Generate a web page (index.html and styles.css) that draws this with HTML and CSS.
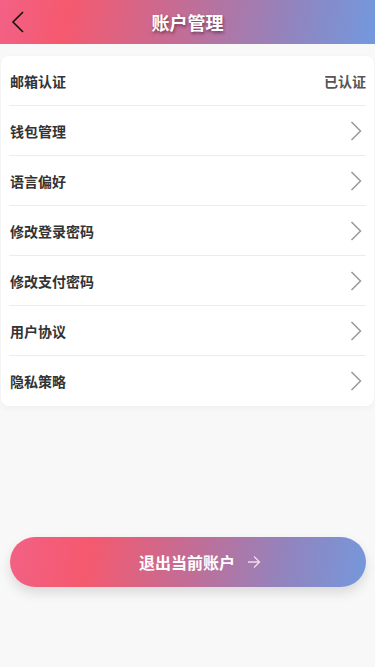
FILE: index.html
```html
<!DOCTYPE html>
<html lang="zh">
<head>
<meta charset="UTF-8">
<meta name="viewport" content="width=device-width, initial-scale=1.0">
<title>账户管理</title>
<link rel="stylesheet" href="styles.css">
</head>
<body>
<div class="header">
  <span class="back">
    <svg width="14" height="22" viewBox="0 0 14 22"><path d="M12 1 L2 11 L12 21" fill="none" stroke="#111" stroke-width="1.6"/></svg>
  </span>
  <div class="title">账户管理</div>
</div>
<div class="card">
  <div class="row"><span class="label">邮箱认证</span><span class="value">已认证</span></div>
  <div class="row"><span class="label">钱包管理</span><span class="arrow"><svg width="12" height="20" viewBox="0 0 12 20"><path d="M1.5 1 L10.5 10 L1.5 19" fill="none" stroke="#999" stroke-width="1.5"/></svg></span></div>
  <div class="row"><span class="label">语言偏好</span><span class="arrow"><svg width="12" height="20" viewBox="0 0 12 20"><path d="M1.5 1 L10.5 10 L1.5 19" fill="none" stroke="#999" stroke-width="1.5"/></svg></span></div>
  <div class="row"><span class="label">修改登录密码</span><span class="arrow"><svg width="12" height="20" viewBox="0 0 12 20"><path d="M1.5 1 L10.5 10 L1.5 19" fill="none" stroke="#999" stroke-width="1.5"/></svg></span></div>
  <div class="row"><span class="label">修改支付密码</span><span class="arrow"><svg width="12" height="20" viewBox="0 0 12 20"><path d="M1.5 1 L10.5 10 L1.5 19" fill="none" stroke="#999" stroke-width="1.5"/></svg></span></div>
  <div class="row"><span class="label">用户协议</span><span class="arrow"><svg width="12" height="20" viewBox="0 0 12 20"><path d="M1.5 1 L10.5 10 L1.5 19" fill="none" stroke="#999" stroke-width="1.5"/></svg></span></div>
  <div class="row last"><span class="label">隐私策略</span><span class="arrow"><svg width="12" height="20" viewBox="0 0 12 20"><path d="M1.5 1 L10.5 10 L1.5 19" fill="none" stroke="#999" stroke-width="1.5"/></svg></span></div>
</div>
<div class="logout">
  <span>退出当前账户</span>
  <svg width="14" height="14" viewBox="0 0 14 14"><path d="M1 7 H12.5 M7 1.5 L12.5 7 L7 12.5" fill="none" stroke="#f3dbe6" stroke-width="1.3"/></svg>
</div>
</body>
</html>
```
FILE: styles.css
```css
body {
  margin: 0;
  background-color: #f8f8f8;
  font-family: "Noto Sans CJK SC", "Noto Sans", sans-serif;
  height: 667px;
}
.header {
  height: 44px;
  background: linear-gradient(100deg, #f26185 0%, #f5596e 18%, #c06e98 50%, #9085c0 78%, #7299de 100%);
  display: flex;
  align-items: center;
  justify-content: center;
  position: relative;
}
.back {
  position: absolute;
  left: 11px;
  top: 11px;
}
.title {
  color: #fff;
  font-size: 18px;
  font-weight: bold;
  text-shadow: 1px 2px 3px rgba(60, 20, 40, 0.55);
}
.card {
  background-color: #fff;
  margin: 12px 1px 0 1px;
  border-radius: 8px;
  padding: 0 8px;
  box-shadow: 0 2px 6px rgba(0, 0, 0, 0.04);
}
.row {
  height: 50px;
  display: flex;
  align-items: center;
  justify-content: space-between;
  border-bottom: 1px solid #ececec;
  box-sizing: border-box;
}
.row.last {
  border-bottom: none;
}
.label {
  font-size: 14px;
  font-weight: bold;
  color: #333;
  padding-left: 1px;
}
.value {
  font-size: 14px;
  color: #555;
  font-weight: bold;
}
.arrow {
  display: flex;
  margin-right: 4px;
}
.logout {
  margin: 131px 9px 0 10px;
  height: 50px;
  border-radius: 25px;
  background: linear-gradient(100deg, #f26185 0%, #f5596e 22%, #c06e98 52%, #9085c0 78%, #7598dc 100%);
  box-shadow: 0 6px 12px rgba(0, 0, 0, 0.12);
  display: flex;
  align-items: center;
  justify-content: center;
  gap: 12px;
  color: #fff;
  font-size: 16px;
  font-weight: bold;
  padding-left: 24px;
}
```
